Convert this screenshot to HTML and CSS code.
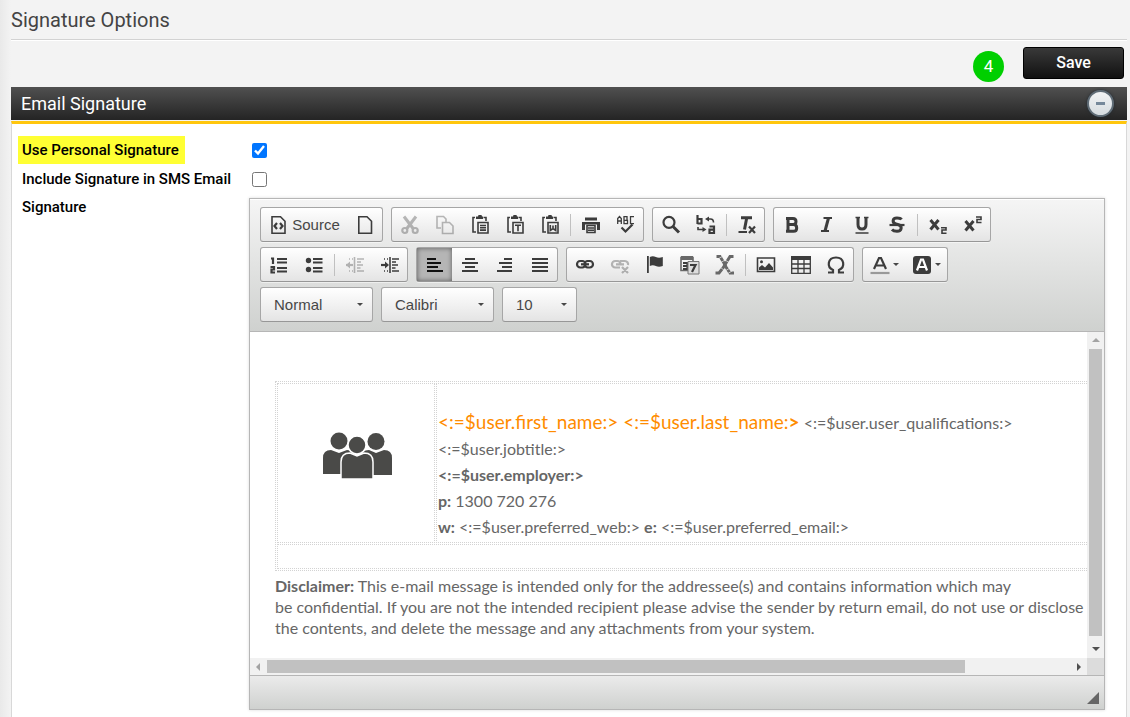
FILE: index.html
```html
<!DOCTYPE html>
<html lang="en">
<head>
<meta charset="utf-8">
<title>Signature Options</title>
<link rel="stylesheet" href="styles.css">
</head>
<body>
<main class="page">
  <h1 class="page-title">Signature Options</h1>
  <div class="actions">
    <span class="step">4</span>
    <button class="save" type="button">Save</button>
  </div>
  <section class="panel">
    <header class="panel-head">
      <h2>Email Signature</h2>
      <button class="collapse" type="button" aria-label="Collapse"><span></span></button>
    </header>
    <div class="panel-body">
      <div class="row row-first">
        <label class="name marked" for="personal">Use Personal Signature</label>
        <input class="tick" type="checkbox" id="personal" checked>
      </div>
      <div class="row">
        <label class="name" for="sms">Include Signature in SMS Email</label>
        <input class="tick" type="checkbox" id="sms">
      </div>
      <div class="row row-editor">
        <span class="name name-top">Signature</span>
        <div class="editor">
          <div class="toolbar">
            <div class="bar">
              <div class="group">
                <button class="tool source" type="button"><svg viewBox="0 0 20 20"><path class="l" d="M4 1.8h8.5L17 6.3v12H4z"/><path class="w" d="M9 8 6.500 11 9 14M12 8 14.500 11 12 14"/></svg>Source</button>
                <button class="tool" type="button" aria-label="New page"><svg viewBox="0 0 20 20"><path class="l" d="M3.800 1.800h8.200L16.500 6.300v12H3.800z"/></svg></button>
              </div>
              <div class="group">
                <button class="tool off" type="button" aria-label="Cut"><svg viewBox="0 0 20 20"><path class="x" d="M4 1.500 13.500 14M16 1.500 6.500 14"/><circle class="w" cx="4.800" cy="15.500" r="2.500"/><circle class="w" cx="15.200" cy="15.500" r="2.500"/></svg></button>
                <button class="tool off" type="button" aria-label="Copy"><svg viewBox="0 0 20 20"><path class="l" d="M6 13H2V1.500h6.500L11 4v3M7.500 7.500h7l3.500 3.500v7.500H7.500z"/></svg></button>
                <button class="tool" type="button" aria-label="Paste"><svg viewBox="0 0 20 20"><path class="l" d="M5 2.500H3V17h3M13.500 2.500H16V6"/><path d="M6 1.500h2L8.500 0h3l.5 1.500h1V4H6z"/><path class="l" d="M8 7.500h10V18H8z"/><path class="l" d="M10 10.500h6M10 12.800h6M10 15.100h6"/></svg></button>
                <button class="tool" type="button" aria-label="Paste as plain text"><svg viewBox="0 0 20 20"><path class="l" d="M5 2.500H3V17h3M13.500 2.500H16V6"/><path d="M6 1.500h2L8.500 0h3l.5 1.500h1V4H6z"/><path class="l" d="M8 7.500h10V18H8z"/><path class="l" d="M10 10.300h6M13 10.300v6"/></svg></button>
                <button class="tool" type="button" aria-label="Paste from Word"><svg viewBox="0 0 20 20"><path class="l" d="M5 2.500H3V17h3M13.500 2.500H16V6"/><path d="M6 1.500h2L8.500 0h3l.5 1.500h1V4H6z"/><path class="l" d="M8 7.500h10V18H8z"/><path class="l" d="M10.300 10v5.500l2.700-2 2.700 2V10M13 10.500v3"/></svg></button>
                <span class="sep"></span>
                <button class="tool" type="button" aria-label="Print"><svg viewBox="0 0 20 20"><path d="M4 2.500h12v3H4zM1 7h18v8h-3V9.500H4V15H1z"/><path class="l" d="M6 10.500h8v7H6z"/><path class="l" d="M7 13h6M7 15.300h6"/></svg></button>
                <button class="tool" type="button" aria-label="Spell check"><svg viewBox="0 0 20 20"><path class="t" d="M1.700 9V3.500L3.500 1.500 5.300 3.500V9M1.700 6h3.600M8 1.700v7h3.500V5.300H8h3V1.700zM18 1.700h-3.500v7H18"/><path class="w" d="m5.500 12.500 4 4 7-7"/></svg></button>
              </div>
              <div class="group">
                <button class="tool" type="button" aria-label="Find"><svg viewBox="0 0 20 20"><circle class="w" cx="8" cy="7.300" r="5.500"/><path class="x" d="m12 11.500 6 6"/></svg></button>
                <button class="tool" type="button" aria-label="Replace"><svg viewBox="0 0 20 20"><path class="w" d="M1.500 0v9M1.500 4h4v4.500h-4M13.500 11.500h4.500V19M18 18h-4.500v-3.300H18"/><path class="l" d="M12 4h2.500q3 0 3 3.500M2 12v2.500h5"/><path d="m13 1.500-4 2.500 4 2.500zM6.500 12l4 2.500-4 2.500z"/></svg></button>
                <span class="sep"></span>
                <button class="tool" type="button" aria-label="Remove format"><svg viewBox="0 0 20 20"><path class="x" d="M4 2.700H15M9.800 2.500 7.500 14.500"/><path class="w" d="M1.500 17H10M12 11.500l6 6.500M18 11.500l-6 6.500"/></svg></button>
              </div>
              <div class="group">
                <button class="tool" type="button" aria-label="Bold"><svg viewBox="0 0 20 20"><path class="x" d="M6 3.500v12.800M4 3.500h7q3 0 3 3t-3 3H6h5.500q3.200 0 3.200 3.400t-3.200 3.400H4"/></svg></button>
                <button class="tool" type="button" aria-label="Italic"><svg viewBox="0 0 20 20"><path class="w" d="M6.500 3h8.500M4 16H12"/><path class="x" d="M11.500 3 8 16"/></svg></button>
                <button class="tool" type="button" aria-label="Underline"><svg viewBox="0 0 20 20"><path class="x" d="M6 2v7.500q0 4.500 4 4.500t4-4.500V2"/><path class="l" d="M3.500 2.500H8M12 2.500h4.500M3.500 18h13"/></svg></button>
                <button class="tool" type="button" aria-label="Strikethrough"><svg viewBox="0 0 20 20"><path class="x" d="M14.500 4.500q-1-1.500-4.500-1.500c-5 0-5 5-1 6l2.500.7c4 1.300 3.500 6.500-1.500 6.500q-3.500 0-5-1.700"/><path class="w" d="M2.500 10h15"/></svg></button>
                <span class="sep"></span>
                <button class="tool" type="button" aria-label="Subscript"><svg viewBox="0 0 20 20"><path class="x" d="m2.500 5 8 9.500M10.500 5l-8 9.500"/><path class="l" d="M13 12.800h5V15h-4v3.300h4.500"/></svg></button>
                <button class="tool" type="button" aria-label="Superscript"><svg viewBox="0 0 20 20"><path class="x" d="m2.500 6 8 9.500M10.500 6l-8 9.500"/><path class="l" d="M13 2h5v2.500h-4v3h4.500"/></svg></button>
              </div>
            </div>
            <div class="bar">
              <div class="group">
                <button class="tool" type="button" aria-label="Numbered list"><svg viewBox="0 0 20 20"><path class="w" d="M2 3.500h2V9M1.500 12h3.500v2.500H2.500v3H6"/><path class="w" d="M8 4h10M8 7.500h10M8 13h10M8 16.500h10"/></svg></button>
                <button class="tool" type="button" aria-label="Bulleted list"><svg viewBox="0 0 20 20"><circle cx="4.500" cy="5.500" r="2.700"/><circle cx="4.500" cy="14.500" r="2.700"/><path class="w" d="M9 4h9.500M9 7.500h9.500M9 13h9.500M9 16.500h9.500"/></svg></button>
                <span class="sep"></span>
                <button class="tool off" type="button" aria-label="Outdent"><svg viewBox="0 0 20 20"><path class="w" d="M1 10h7"/><path d="m5 6.500-4 3.500 4 3.500z"/><path class="l" d="M9.500 2v16M12 4h7M12 7h4M12 10h6M12 13h3.500M12 16h7M4 4h1M7 4h1M4 16h1M7 16h1"/></svg></button>
                <button class="tool" type="button" aria-label="Indent"><svg viewBox="0 0 20 20"><path class="w" d="M1 10h6"/><path d="m5 6.500 4 3.500-4 3.500z"/><path class="l" d="M10 2v16M12 4h7M12 7h4M12 10h6M12 13h3.500M12 16h7M4 4h1M7 4h1M4 16h1M7 16h1"/></svg></button>
              </div>
              <div class="group">
                <button class="tool on" type="button" aria-label="Align left"><svg viewBox="0 0 20 20"><path d="M2 3h9v2H2zM2 7h14v2H2zM2 11h11v2H2zM2 15h16v2H2z"/></svg></button>
                <button class="tool" type="button" aria-label="Centre"><svg viewBox="0 0 20 20"><path d="M5 3h10v2H5zM2 7h16v2H2zM5 11h10v2H5zM2 15h16v2H2z"/></svg></button>
                <button class="tool" type="button" aria-label="Align right"><svg viewBox="0 0 20 20"><path d="M9 3h8v2H9zM4 7h13v2H4zM7 11h10v2H7zM2 15h15v2H2z"/></svg></button>
                <button class="tool" type="button" aria-label="Justify"><svg viewBox="0 0 20 20"><path d="M2 3h16v2H2zM2 7h16v2H2zM2 11h16v2H2zM2 15h16v2H2z"/></svg></button>
              </div>
              <div class="group">
                <button class="tool" type="button" aria-label="Link"><svg viewBox="0 0 20 20"><rect class="w" x="2" y="6" width="8.500" height="6.500" rx="3.200"/><rect class="w" x="9.500" y="6" width="8.500" height="6.500" rx="3.200"/><path class="w" d="M6 9.300h8"/></svg></button>
                <button class="tool off" type="button" aria-label="Unlink"><svg viewBox="0 0 20 20"><path class="w" d="M10 12.500H5.200a3.200 3.200 0 0 1 0-6.500h2.100q3.200 0 3.200 3.200M10 6h4.800a3.200 3.200 0 0 1 3.200 4M6 9.300h8M12 12l6 6M18 12l-6 6"/></svg></button>
                <button class="tool" type="button" aria-label="Anchor"><svg viewBox="0 0 20 20"><path d="M2 1h1.800v17H2zM4.800 2q3-1.500 6 0t7 0v9q-4 1.500-7 0t-6 0z"/></svg></button>
                <button class="tool" type="button" aria-label="Merge field"><svg viewBox="0 0 20 20"><path class="l soft" d="M1 2.500h12v13H1z"/><path class="soft-fill" d="M1 1h12v4H1z"/><path class="w" d="M3 8h4.500v6H3M3 11h4"/><path class="sheet" d="M8 6.500h11V19H8z"/><path class="w" d="M10 10h5.500L12 17"/></svg></button>
                <button class="tool" type="button" aria-label="Toggle fields"><svg viewBox="0 0 20 20"><path class="x soft" d="M1.500 1.500h3.500L9 8l2 4 4 6h4"/><path class="x soft" d="M18.500 1.500H15L11 8l-3 5-4 5H.5"/><path class="gap" d="m3 4 5-3M5 8l5-3M10 16l5-3M12 19l5-3M10 5l5 3M5 12l5 4"/></svg></button>
                <span class="sep"></span>
                <button class="tool" type="button" aria-label="Image"><svg viewBox="0 0 20 20"><path class="l" d="M1.500 3h17v13.500h-17z"/><circle cx="5.500" cy="6.700" r="1.500"/><path d="M3 15v-2.500l3-2.500 3 2.500L13 8l4 4.500V15z"/></svg></button>
                <button class="tool" type="button" aria-label="Table"><svg viewBox="0 0 20 20"><path d="M0 1h20v4H0z"/><path class="t" d="M.7 4v14.300h18.600V4M.7 9h18.600M.7 13.500h18.600M7 4v14M13 4v14"/></svg></button>
                <button class="tool" type="button" aria-label="Special character"><svg viewBox="0 0 20 20"><path class="w" d="M2 17.500h5V15C.500 12 1.500 2.500 10 2.500S19.500 12 13 15v2.500h5"/></svg></button>
              </div>
              <div class="group">
                <button class="tool wide" type="button" aria-label="Text colour"><svg viewBox="0 0 20 20"><path class="w" d="M4 14 9 3h2l5 11M6 10.500h8"/><path class="w faint" d="M.5 18h19"/></svg><i class="arrow"></i></button>
                <button class="tool wide" type="button" aria-label="Background colour"><svg viewBox="0 0 20 20"><rect x="1" y="1" width="18" height="18" rx="3"/><path class="w white" d="m5 15.500 4-11h2l4 11M7 12h6"/></svg><i class="arrow"></i></button>
              </div>
            </div>
            <div class="bar">
              <div class="combo"><select aria-label="Paragraph format"><option>Normal</option></select><i class="arrow"></i></div>
              <div class="combo"><select aria-label="Font"><option>Calibri</option></select><i class="arrow"></i></div>
              <div class="combo combo-small"><select aria-label="Font size"><option>10</option></select><i class="arrow"></i></div>
            </div>
          </div>
          <div class="canvas">
            <div class="doc">
              <table class="card">
                <tr>
                  <td class="logo">
                    <svg viewBox="0 0 70 48" role="img" aria-label="Three people">
                      <circle cx="16" cy="9" r="8.500"/><circle cx="53" cy="9.500" r="8.500"/>
                      <path d="M0 42V26q0-8 8-8l8 3 8-3q8 0 8 8v16zM38 43V26q0-8 8-8l7 3 8-3q8 0 8 8v17z"/>
                      <g class="edge"><circle cx="34" cy="13" r="9"/><path d="M18 47V30q0-9 9-9l7 3 7-3q9 0 9 9v17z"/></g>
                    </svg>
                  </td>
                  <td class="details">
                    <div><span class="person">&lt;:=$user.first_name:&gt; &lt;:=$user.last_name:<b>&gt;</b></span> &lt;:=$user.user_qualifications:&gt;</div>
                    <div>&lt;:=$user.jobtitle:&gt;</div>
                    <div><b>&lt;:=$user.employer:&gt;</b></div>
                    <div><b>p:</b> 1300 720 276</div>
                    <div><b>w:</b> &lt;:=$user.preferred_web:&gt; <b>e:</b> &lt;:=$user.preferred_email:&gt;</div>
                  </td>
                </tr>
                <tr><td class="blank" colspan="2"></td></tr>
              </table>
              <p class="legal"><b>Disclaimer:</b> This e-mail message is intended only for the addressee(s) and contains information which may<br>be confidential. If you are not the intended recipient please advise the sender by return email, do not use or disclose<br>the contents, and delete the message and any attachments from your system.</p>
            </div>
            <div class="scroll-y"><i class="tri up"></i><span class="thumb"></span><i class="tri down"></i></div>
            <div class="scroll-x"><i class="tri left"></i><span class="thumb"></span><span class="rest"></span><i class="tri right"></i></div>
            <div class="corner"></div>
          </div>
          <div class="foot"><svg class="grip" viewBox="0 0 12 12"><path d="M12 0v12H0z"/></svg></div>
        </div>
      </div>
    </div>
  </section>
</main>
</body>
</html>
```
FILE: styles.css
```css
* { box-sizing: border-box; }
body {
  margin: 0;
  background: #f3f3f3 linear-gradient(90deg, #e9e9e9, #f3f3f3) no-repeat 0 0 / 11px 100%;
  font-family: Roboto, sans-serif;
  color: #000;
}
button, select, input { margin: 0; font: inherit; }
.page { padding: 0 3px 0 11px; }
.page-title {
  margin: 0;
  height: 40px;
  line-height: 40px;
  border-bottom: 1px solid #d2d2d2;
  box-shadow: 0 1px #fff;
  font-size: 20px;
  font-weight: 400;
  color: #444;
}
.actions {
  display: flex;
  justify-content: flex-end;
  gap: 19px;
  height: 47px;
  padding: 7px 3px 0 0;
}
.step {
  width: 31px;
  height: 31px;
  margin-top: 4px;
  border-radius: 50%;
  background: #00cf00;
  color: #fff;
  font-size: 17px;
  line-height: 31px;
  text-align: center;
}
.save {
  width: 101px;
  height: 32px;
  padding: 0 0 2px;
  border: 1px solid #000;
  border-radius: 3px;
  background: linear-gradient(#393939, #111);
  color: #fff;
  font-size: 16px;
  font-weight: 500;
}
.panel-head {
  display: flex;
  align-items: center;
  justify-content: space-between;
  height: 33px;
  padding: 0 13px 0 10px;
  background: linear-gradient(#505050, #242424);
}
.panel-head h2 { margin: 0; font-size: 18px; font-weight: 400; color: #fff; }
.collapse {
  display: grid;
  place-items: center;
  width: 27px;
  height: 27px;
  padding: 0;
  border: 2px solid #5f6c76;
  border-radius: 50%;
  background: linear-gradient(#f2f4f5, #d5dbdf);
  box-shadow: 0 0 3px #222b33;
}
.collapse span { width: 9px; height: 3px; background: #75889a; }
.panel-body {
  margin-top: 1px;
  padding: 12px 21px 8px 6px;
  border: 1px solid #d8d8d8;
  border-top: 3px solid #ffc60d;
  border-bottom: 0;
  min-height: 600px;
  background: #fff;
}
.row {
  display: grid;
  grid-template-columns: 231px minmax(0, 1fr);
  align-items: center;
  min-height: 30px;
}
.row-first { min-height: 28px; }
.name {
  justify-self: start;
  padding: 1px 6px 0 4px;
  font-size: 15px;
  font-weight: 500;
  line-height: 27px;
  white-space: nowrap;
}
.name-top { align-self: start; line-height: 25px; }
.marked { background: #ffff33; }
.tick { width: 15px; height: 15px; margin-left: 3px; accent-color: #0075ff; }
.row-editor { padding-top: 4px; }
.row-editor .name { margin-top: -4px; }

.editor {
  border: 1px solid #b6b6b6;
  box-shadow: 0 0 3px rgba(0, 0, 0, .15);
  font-family: "Liberation Sans", Arial, sans-serif;
  color: #474747;
}
.toolbar {
  display: grid;
  gap: 5px;
  padding: 8px 10px 9px;
  border-bottom: 1px solid #b6b6b6;
  background: linear-gradient(#f5f5f5, #cfd1cf);
  box-shadow: inset 0 1px #fff;
}
.bar { display: flex; flex-wrap: wrap; gap: 8px; }
.group {
  display: flex;
  align-items: center;
  height: 35px;
  border: 1px solid #a6a6a6;
  border-bottom-color: #979797;
  border-radius: 3px;
  background: linear-gradient(#fff, #e4e4e4);
  box-shadow: 0 1px rgba(255, 255, 255, .5);
}
.tool {
  display: flex;
  align-items: center;
  justify-content: center;
  width: 35px;
  height: 33px;
  padding: 0;
  border: 0;
  background: none;
  color: #474747;
  font-size: 15px;
}
.tool svg {
  width: 20px;
  height: 20px;
  flex: none;
  fill: #3c3c3c;
  stroke: none;
}
.tool svg .t, .tool svg .l, .tool svg .w, .tool svg .x { fill: none; stroke: #3c3c3c; stroke-width: 1.6; }
.tool svg .t { stroke-width: 1.3; }
.tool svg .w { stroke-width: 2.2; }
.tool svg .x { stroke-width: 3; }
.tool svg .faint { stroke: #999; }
.tool svg .soft { stroke: #686868; }
.tool svg .soft-fill { fill: #686868; }
.tool svg .sheet { fill: #ddd; stroke: #777; }
.tool svg .gap { fill: none; stroke: #eee; stroke-width: .7; }
.tool svg .white { stroke: #fff; }
.source { width: 86px; gap: 4px; }
.wide { width: 42px; gap: 3px; }
.off { opacity: .35; }
.on { background: #b5b5b5; box-shadow: inset 0 0 5px rgba(0, 0, 0, .5); }
.on svg { fill: #111; }
.sep { width: 1px; height: 22px; margin: 0 2px 0 3px; background: #c0c0c0; }
.arrow {
  width: 0;
  height: 0;
  border: 3px solid transparent;
  border-top-color: #474747;
  border-bottom: 0;
}
.combo { position: relative; width: 113px; }
.combo-small { width: 75px; }
.combo select {
  display: block;
  appearance: none;
  width: 100%;
  height: 35px;
  padding: 0 13px;
  border: 1px solid #a6a6a6;
  border-bottom-color: #979797;
  border-radius: 3px;
  background: linear-gradient(#fff, #e4e4e4);
  color: #474747;
  font-size: 15px;
}
.combo .arrow { position: absolute; top: 16px; right: 10px; pointer-events: none; }

.canvas {
  display: grid;
  grid-template-columns: minmax(0, 1fr) 17px;
  grid-template-rows: auto 17px;
  background: #fff;
}
.doc {
  overflow: hidden;
  padding: 49px 0 20px 25px;
  font-family: Lato, "Open Sans", sans-serif;
  font-size: 16px;
  color: #666;
  white-space: nowrap;
}
.card { width: 960px; border: 1px dotted #d3d3d3; border-spacing: 1px; }
.card td { padding: 1px; border: 1px dotted #d3d3d3; }
.card .logo { width: 158px; padding-left: 4px; text-align: center; }
.logo svg { width: 70px; height: 48px; margin-top: -14px; vertical-align: middle; fill: #4a4a48; }
.logo .edge { stroke: #fff; stroke-width: 1.5; }
.card .details { padding: 25px 1px 2px; vertical-align: top; line-height: 26px; }
.person { font-size: 19px; color: #ff8c00; }
.card .blank { height: 25px; }
.legal { margin: 4px 0 0; line-height: 21px; }
.scroll-y, .scroll-x { display: flex; align-items: center; background: #f1f1f1; }
.scroll-y { flex-direction: column; }
.thumb { background: #c1c1c1; }
.scroll-y .thumb { flex: 1; width: 13px; }
.scroll-x .thumb { flex: 698; height: 13px; }
.rest { flex: 105; }
.corner { background: #dcdcdc; }
.tri { border: 4px solid transparent; }
.up { margin: 2px 0 7px; border-bottom-color: #a3a3a3; }
.down { margin: 11px 0 3px; border-top-color: #505050; }
.left { margin: 0 7px 0 2px; border-right-color: #a3a3a3; }
.right { margin: 0 2px 0 7px; border-left-color: #505050; }
.foot {
  display: flex;
  align-items: flex-end;
  justify-content: flex-end;
  height: 34px;
  padding: 5px;
  border-top: 1px solid #b6b6b6;
  background: linear-gradient(#ebebeb, #cfd1cf);
}
.grip { width: 12px; height: 12px; fill: #666; }
```
